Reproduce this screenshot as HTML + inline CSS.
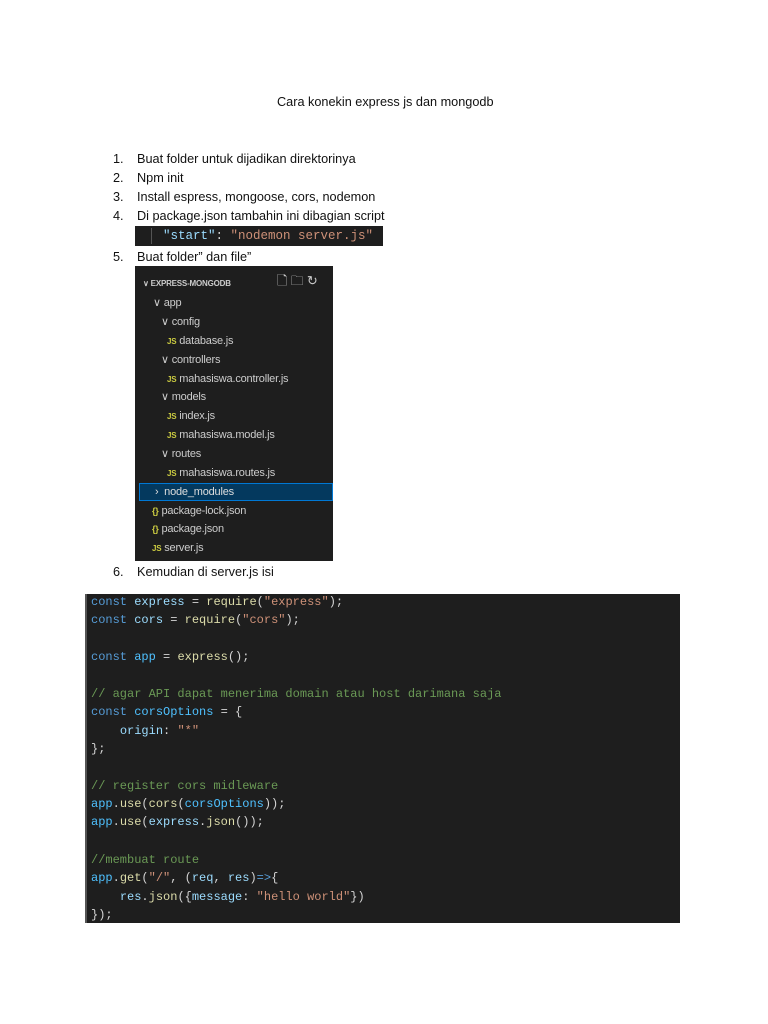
<!DOCTYPE html>
<html><head><meta charset="utf-8"><style>
body{margin:0;background:#fff;width:768px;height:1024px;position:relative;font-family:"Liberation Sans",sans-serif;color:#111;overflow:hidden}
.t{position:absolute;font-size:12.7px;white-space:nowrap;line-height:14px}
.code{position:absolute;left:85px;top:594px;width:595px;height:329px;background:#1e1e1e;border-left:2px solid #555;box-sizing:border-box}
.cl{position:absolute;left:4px;font-family:"Liberation Mono",monospace;font-size:12px;line-height:14px;white-space:pre;color:#d4d4d4}
.k{color:#569cd6}.v{color:#9cdcfe}.f{color:#dcdcaa}.s{color:#ce9178}.c{color:#6a9955}.a{color:#4fc1ff}
.tree{position:absolute;left:135px;top:266px;width:198px;height:295px;background:#1e1e1e}
.r{position:absolute;font-size:11px;color:#ccc;white-space:nowrap;line-height:12px;letter-spacing:-0.2px}
.js{color:#cbcb41;font-weight:bold;font-size:8px}
.br{color:#cbcb41;font-size:9px;font-weight:bold}
</style></head><body>
<div class="t" style="left:277px;top:95px">Cara konekin express js dan mongodb</div>
<div class="t" style="left:113px;top:152px">1.</div><div class="t" style="left:137px;top:152px">Buat folder untuk dijadikan direktorinya</div>
<div class="t" style="left:113px;top:171px">2.</div><div class="t" style="left:137px;top:171px">Npm init</div>
<div class="t" style="left:113px;top:190px">3.</div><div class="t" style="left:137px;top:190px">Install espress, mongoose, cors, nodemon</div>
<div class="t" style="left:113px;top:209px">4.</div><div class="t" style="left:137px;top:209px">Di package.json tambahin ini dibagian script</div>
<div style="position:absolute;left:135px;top:226px;width:248px;height:20px;background:#1e1e1e">
<div style="position:absolute;left:16px;top:2px;width:1px;height:16px;background:#555"></div>
<div style="position:absolute;left:28px;top:3px;font-family:'Liberation Mono',monospace;font-size:12.5px;white-space:pre;line-height:14px"><span class="v">"start"</span><span style="color:#d4d4d4">: </span><span class="s">"nodemon server.js"</span></div></div>
<div class="t" style="left:113px;top:250px">5.</div><div class="t" style="left:137px;top:250px">Buat folder” dan file”</div>
<div class="tree">
<div class="r" style="left:8px;top:12px;font-size:8px;font-weight:bold;color:#ccc">∨ EXPRESS-MONGODB</div>
<div class="r" style="left:142px;top:9px;font-size:13px;color:#ccc">🗋 🗀 ↻</div>
<div class="r" style="left:18px;top:31px">∨ app</div>
<div class="r" style="left:26px;top:50px">∨ config</div>
<div class="r" style="left:32px;top:69px"><span class="js">JS</span> database.js</div>
<div class="r" style="left:26px;top:88px">∨ controllers</div>
<div class="r" style="left:32px;top:107px"><span class="js">JS</span> mahasiswa.controller.js</div>
<div class="r" style="left:26px;top:125px">∨ models</div>
<div class="r" style="left:32px;top:144px"><span class="js">JS</span> index.js</div>
<div class="r" style="left:32px;top:163px"><span class="js">JS</span> mahasiswa.model.js</div>
<div class="r" style="left:26px;top:182px">∨ routes</div>
<div class="r" style="left:32px;top:201px"><span class="js">JS</span> mahasiswa.routes.js</div>
<div style="position:absolute;left:4px;top:217px;width:194px;height:18px;background:#04395e;border:1px solid #0078d4;box-sizing:border-box"></div>
<div class="r" style="left:20px;top:220px;color:#ddd">›&nbsp; node_modules</div>
<div class="r" style="left:17px;top:239px"><span class="br">{}</span> package-lock.json</div>
<div class="r" style="left:17px;top:257px"><span class="br">{}</span> package.json</div>
<div class="r" style="left:17px;top:276px"><span class="js">JS</span> server.js</div>
</div>
<div class="t" style="left:113px;top:565px">6.</div><div class="t" style="left:137px;top:565px">Kemudian di server.js isi</div>
<div class="code">
<div class="cl" style="top:1px"><span class="k">const</span> <span class="v">express</span> = <span class="f">require</span>(<span class="s">"express"</span>);</div>
<div class="cl" style="top:19px"><span class="k">const</span> <span class="v">cors</span> = <span class="f">require</span>(<span class="s">"cors"</span>);</div>
<div class="cl" style="top:56px"><span class="k">const</span> <span class="a">app</span> = <span class="f">express</span>();</div>
<div class="cl" style="top:93px"><span class="c">// agar API dapat menerima domain atau host darimana saja</span></div>
<div class="cl" style="top:111px"><span class="k">const</span> <span class="a">corsOptions</span> = {</div>
<div class="cl" style="top:130px">    <span class="v">origin</span>: <span class="s">"*"</span></div>
<div class="cl" style="top:148px">};</div>
<div class="cl" style="top:185px"><span class="c">// register cors midleware</span></div>
<div class="cl" style="top:203px"><span class="a">app</span>.<span class="f">use</span>(<span class="f">cors</span>(<span class="a">corsOptions</span>));</div>
<div class="cl" style="top:221px"><span class="a">app</span>.<span class="f">use</span>(<span class="v">express</span>.<span class="f">json</span>());</div>
<div class="cl" style="top:259px"><span class="c">//membuat route</span></div>
<div class="cl" style="top:277px"><span class="a">app</span>.<span class="f">get</span>(<span class="s">"/"</span>, (<span class="v">req</span>, <span class="v">res</span>)<span class="k">=&gt;</span>{</div>
<div class="cl" style="top:296px">    <span class="v">res</span>.<span class="f">json</span>({<span class="v">message</span>: <span class="s">"hello world"</span>})</div>
<div class="cl" style="top:314px">});</div>
</div>
</body></html>
